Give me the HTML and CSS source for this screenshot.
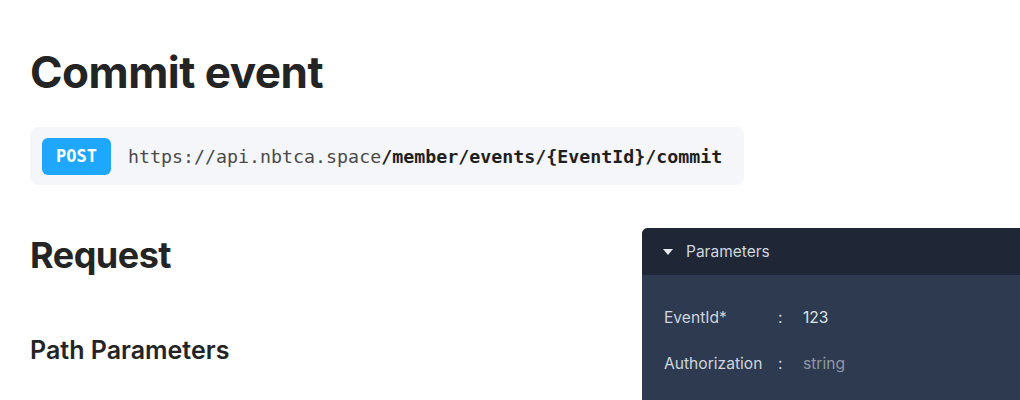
FILE: index.html
```html
<!DOCTYPE html>
<html lang="en">
<head>
<meta charset="utf-8">
<title>Commit event</title>
<link rel="stylesheet" href="styles.css">
</head>
<body>
<main class="page">
  <h1 class="title">Commit event</h1>
  <div class="endpoint">
    <span class="method">POST</span>
    <code class="url">https://api.nbtca.space<b>/member/events/{EventId}/commit</b></code>
  </div>
  <div class="row">
    <section class="doc">
      <h2 class="h2">Request</h2>
      <h3 class="h3">Path Parameters</h3>
    </section>
    <aside class="panel">
      <div class="panel-head">
        <span class="caret"></span>
        <span class="panel-title">Parameters</span>
      </div>
      <div class="panel-body">
        <div class="param">
          <span class="pname">EventId*</span>
          <span class="colon">:</span>
          <span class="pval">123</span>
        </div>
        <div class="param">
          <span class="pname">Authorization</span>
          <span class="colon">:</span>
          <span class="pval placeholder">string</span>
        </div>
      </div>
    </aside>
  </div>
</main>
</body>
</html>
```
FILE: styles.css
```css
html, body {
  margin: 0;
  padding: 0;
  background: #ffffff;
  overflow: hidden;
}
body {
  font-family: Inter, "Noto Sans", sans-serif;
  color: #242424;
}
.page {
  padding: 40px 0 0 30px;
}
.title {
  margin: 0;
  font-size: 44px;
  font-weight: 700;
  line-height: 64px;
  letter-spacing: -0.5px;
}
.endpoint {
  margin-top: 23px;
  width: 714px;
  height: 58px;
  box-sizing: border-box;
  padding: 0 12px;
  background: #f5f6f9;
  border-radius: 8px;
  display: flex;
  align-items: center;
  gap: 17px;
}
.method {
  background: #1ea7fd;
  color: #ffffff;
  font-family: "DejaVu Sans Mono", monospace;
  font-weight: 700;
  font-size: 17px;
  height: 37px;
  width: 69px;
  border-radius: 6px;
  display: flex;
  align-items: center;
  justify-content: center;
}
.url {
  font-family: "DejaVu Sans Mono", monospace;
  font-size: 18.3px;
  color: #4a4a4a;
}
.url b {
  color: #1f1f1f;
}
.row {
  display: flex;
  justify-content: space-between;
  margin-top: 43px;
}
.h2 {
  margin: 5px 0 0;
  font-size: 36px;
  font-weight: 700;
  line-height: 44px;
  letter-spacing: -0.5px;
}
.h3 {
  margin: 57px 0 0;
  font-size: 25px;
  font-weight: 600;
  line-height: 32px;
}
.panel {
  width: 378px;
  height: 200px;
  border-top-left-radius: 6px;
  overflow: hidden;
  background: #2d3a4f;
  color: #cfd5de;
}
.panel-head {
  height: 47px;
  background: #1f2737;
  display: flex;
  align-items: center;
  padding-left: 21px;
  gap: 13px;
}
.caret {
  width: 0;
  height: 0;
  border-left: 5px solid transparent;
  border-right: 5px solid transparent;
  border-top: 6px solid #e6e9ee;
}
.panel-title {
  font-size: 15.5px;
  color: #cfd5de;
}
.panel-body {
  padding: 32px 0 0 22px;
  display: flex;
  flex-direction: column;
  gap: 24px;
}
.param {
  display: flex;
  align-items: center;
  font-size: 15.6px;
  line-height: 22px;
}
.pname {
  width: 114px;
}
.colon {
  width: 25px;
}
.pval {
  color: #dde2e9;
}
.placeholder {
  color: #8f98a7;
}
```
